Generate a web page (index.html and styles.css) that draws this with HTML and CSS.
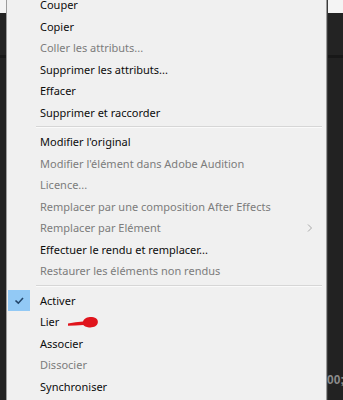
FILE: index.html
```html
<!DOCTYPE html>
<html lang="fr">
<head>
<meta charset="utf-8">
<link rel="stylesheet" href="styles.css">
</head>
<body>
<div class="stage">
  <div class="menu">
    <div class="item">Couper</div>
    <div class="item">Copier</div>
    <div class="item disabled">Coller les attributs...</div>
    <div class="item">Supprimer les attributs...</div>
    <div class="item">Effacer</div>
    <div class="item">Supprimer et raccorder</div>
    <div class="sep"></div>
    <div class="item">Modifier l'original</div>
    <div class="item disabled">Modifier l'élément dans Adobe Audition</div>
    <div class="item disabled">Licence...</div>
    <div class="item disabled">Remplacer par une composition After Effects</div>
    <div class="item disabled sub">Remplacer par Elément
      <svg class="arrow" width="6" height="8" viewBox="0 0 6 8"><path d="M1 0.5 L4.5 4 L1 7.5" fill="none" stroke="#a8a8a8" stroke-width="1"/></svg>
    </div>
    <div class="item">Effectuer le rendu et remplacer...</div>
    <div class="item disabled">Restaurer les éléments non rendus</div>
    <div class="sep"></div>
    <div class="item checked">
      <span class="check"><svg width="22" height="21" viewBox="0 0 22 21"><path d="M7.5 10.5 L10.3 13.2 L15 8" fill="none" stroke="#22456a" stroke-width="1.6"/></svg></span>Activer</div>
    <div class="item">Lier<svg class="scribble" width="32" height="13" viewBox="0 0 32 13"><path d="M1 7.5 C6 6.5 11 6 16 5.6 C17 2.2 21 0.8 25 1 C29.5 1.3 31.3 4 30.8 6.8 C30.3 10.2 26.5 11.8 22 11.4 C19 11.1 17 10 16.3 9 C11 9.2 6 9.6 1 9.8 Z" fill="#e0141c"/></svg></div>
    <div class="item">Associer</div>
    <div class="item disabled">Dissocier</div>
    <div class="item">Synchroniser</div>
  </div>
  <div class="timecode">00;</div>
</div>
</body>
</html>
```

FILE: styles.css
```css
html, body {
  margin: 0;
  padding: 0;
}
body {
  width: 343px;
  height: 400px;
  overflow: hidden;
  background: linear-gradient(to bottom,
    #f4f4f4 0, #f4f4f4 13px,
    #232323 13px, #232323 55px,
    #181818 55px, #181818 58px,
    #222222 58px, #222222 100%);
  font-family: "Noto Sans", "Open Sans", sans-serif;
}
.stage {
  position: relative;
  height: 400px;
}
.menu {
  margin-left: 6px;
  margin-top: -6px;
  width: 319px;
  background: #f0f0f0;
  border-left: 1px solid #9c9c9c;
  border-right: 1px solid #9a9a9a;
  box-shadow: 1px 0 0 #3a3a3a;
  padding-bottom: 10px;
}
.item {
  position: relative;
  height: 21.5px;
  line-height: 21.5px;
  padding-left: 33px;
  font-size: 11px;
  color: #0c0c0c;
  white-space: nowrap;
  display: flex;
  align-items: center;
}
.item.disabled {
  color: #7c7c7c;
}
.sep {
  height: 8px;
  display: flex;
  align-items: center;
  padding-left: 29px;
  padding-right: 4px;
}
.sep::before {
  content: "";
  flex: 1;
  height: 1px;
  background: #d6d6d6;
  border-bottom: 1px solid #fafafa;
}
.check {
  position: absolute;
  left: 1px;
  top: 0;
  width: 22px;
  height: 21px;
  background: #92c9f5;
  display: flex;
}
.arrow {
  position: absolute;
  right: 13px;
  top: 7px;
}
.scribble {
  margin-left: 8px;
  margin-top: 2px;
}
.timecode {
  position: absolute;
  left: 327px;
  top: 379px;
  font-size: 12px;
  font-weight: bold;
  color: #8c8c8c;
  font-family: "Liberation Sans", sans-serif;
}
```
